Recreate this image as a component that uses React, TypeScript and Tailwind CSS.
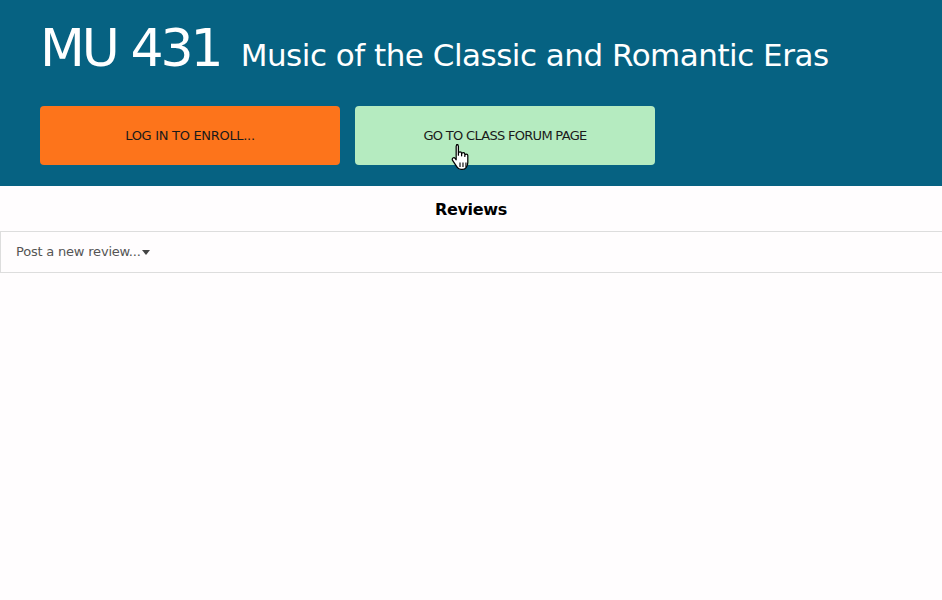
import React from "react";

function HandCursor() {
  return (
    <svg width="20" height="26" viewBox="1 1 16 21" className="absolute left-[451px] top-[144px]">
      <path
        d="M5.5 1.5c.8 0 1.4.6 1.4 1.4V10V8.6c0-.8.6-1.3 1.3-1.3s1.3.5 1.3 1.3V10.5V9.3c0-.8.6-1.3 1.300-1.3s1.3.5 1.3 1.3V11V10.3c0-.7.6-1.2 1.2-1.2s1.2.5 1.2 1.2V16c0 2.8-1.8 5.5-4.4 5.5H9c-1.5 0-2.5-.8-3.3-2L2.2 14.2c-.5-.7-.3-1.5.3-1.9.6-.4 1.4-.2 1.8.4l.8 1.1V2.9c0-.8.6-1.4 1.4-1.4z"
        fill="#fff"
        stroke="#000"
        strokeWidth="1"
        strokeLinejoin="round"
      />
      <path d="M8.2 16v3.5M10.6 16v3.5M13 16v3.5" stroke="#000" strokeWidth="0.9" />
    </svg>
  );
}

export default function App() {
  return (
    <div
      className="relative min-h-[600px] w-full bg-[#fffdfe]"
      style={{ fontFamily: '"DejaVu Sans", Verdana, sans-serif' }}
    >
      <header className="bg-[#066282] h-[186px] px-[40px] pt-[22px]">
        <h1 className="flex items-baseline text-white leading-none">
          <span className="text-[52px] tracking-[-3px]">MU 431</span>
          <span className="ml-[20px] text-[31px] tracking-[-0.5px]">Music of the Classic and Romantic Eras</span>
        </h1>
        <div className="mt-[32px] flex gap-[15px]">
          <button className="w-[300px] h-[59px] rounded-[4px] bg-[#fd741b] text-[13px] text-[#1a1a1a] uppercase tracking-[-0.3px]">
            Log in to enroll...
          </button>
          <button className="w-[300px] h-[59px] rounded-[4px] bg-[#b5ebc0] text-[13px] text-[#1a1a1a] uppercase tracking-[-0.7px]">
            Go to class forum page
          </button>
        </div>
      </header>
      <div className="h-[45px] pt-[2px] flex items-center justify-center text-[16px] font-bold text-black tracking-[-0.3px]">
        Reviews
      </div>
      <div className="h-[42px] border-y border-l border-[#dddddd] flex items-center px-[15px] text-[13px] text-[#555555] tracking-[-0.2px]">
        Post a new review...
        <span className="ml-[1px] inline-block w-0 h-0 border-l-[4px] border-r-[4px] border-t-[5px] border-l-transparent border-r-transparent border-t-[#444]" />
      </div>
      <HandCursor />
    </div>
  );
}
